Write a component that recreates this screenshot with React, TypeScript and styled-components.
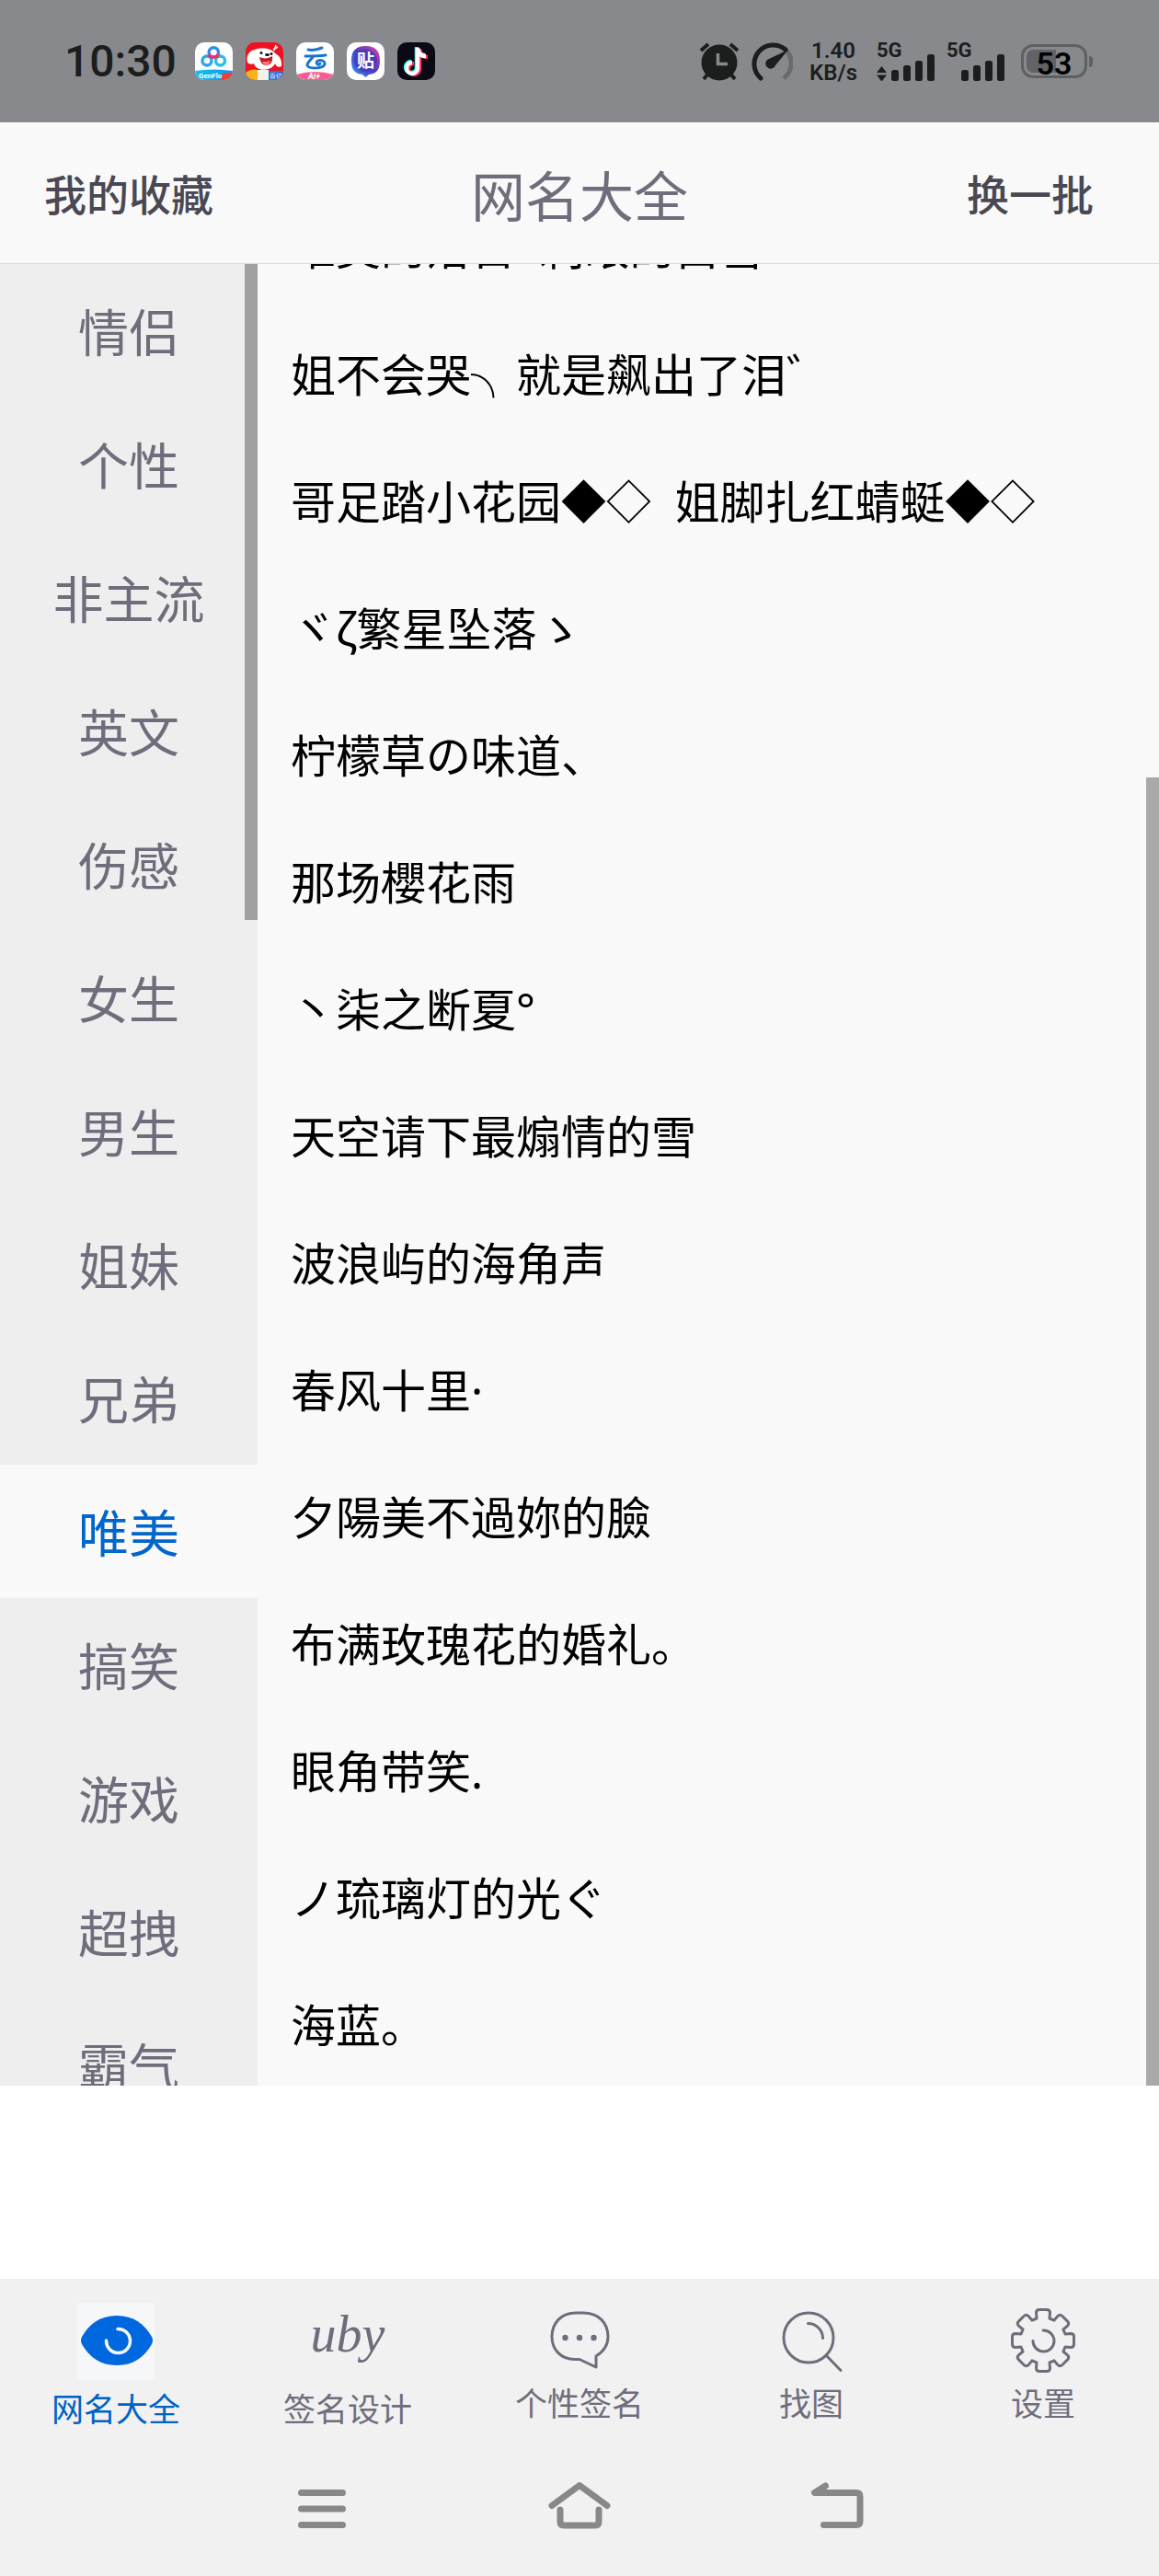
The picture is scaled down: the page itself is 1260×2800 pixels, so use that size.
import React, { useState } from 'react';
import styled, { createGlobalStyle } from 'styled-components';

const cjk = '"Noto Sans", "Noto Sans CJK SC", "Noto Sans CJK JP", sans-serif';

const GlobalStyle = createGlobalStyle`
  *, *::before, *::after { box-sizing: border-box; }
  body { margin: 0; background: #ffffff; font-family: ${cjk}; }
  button { margin: 0; padding: 0; border: 0; background: none; font: inherit; color: inherit; cursor: pointer; }
  ul { margin: 0; padding: 0; list-style: none; }
  svg { display: block; }
`;

const Screen = styled.div`
  display: flex;
  flex-direction: column;
  height: 100vh;
  overflow: hidden;
`;

/* ---------- status bar ---------- */

const StatusBar = styled.div`
  flex: none;
  display: flex;
  align-items: center;
  justify-content: space-between;
  height: 133px;
  padding: 0 72px 0 70px;
  background: #88898d;
  color: #1c1e1e;
  font-family: Roboto, sans-serif;
  font-weight: 500;
`;

const StatusGroup = styled.div<{ $gap: number }>`
  display: flex;
  align-items: center;
  gap: ${(p) => p.$gap}px;
`;

const Clock = styled.time`
  margin-right: 6px;
  font-size: 48px;
  line-height: 56px;
`;

const AppBadge = styled.svg`
  width: 41px;
  height: 41px;
  border-radius: 10px;
`;

const NetSpeed = styled.div`
  display: flex;
  flex-direction: column;
  align-items: center;
  margin: 0 9px 0 6px;
  font-size: 24px;
  line-height: 24px;
  font-weight: 600;
`;

const SignalBox = styled.div`
  display: grid;
  width: 64px;
  height: 42px;
  > * { grid-area: 1 / 1; }
`;

const SignalLabel = styled.span`
  font-size: 22px;
  line-height: 17px;
  font-weight: 700;
`;

const BatteryBox = styled.div`
  display: flex;
  align-items: center;
  gap: 2px;
  margin-left: 5px;
`;

const BatteryCell = styled.div`
  display: grid;
  place-items: center;
  width: 72px;
  height: 37px;
  border: 3px solid #5f6063;
  border-radius: 13px;
  background: linear-gradient(90deg, #626366 0 32px, #88898d 32px) content-box;
  padding: 3px;
  color: #000000;
  font-size: 34px;
  line-height: 30px;
  font-weight: 600;
`;

const BatteryTip = styled.span`
  width: 4px;
  height: 12px;
  border-radius: 0 6px 6px 0;
  background: #5f6063;
`;

/* ---------- header ---------- */

const Header = styled.header`
  flex: none;
  display: grid;
  grid-template-columns: 1fr auto 1fr;
  align-items: center;
  height: 154px;
  border-bottom: 1px solid #dadada;
  background: #f9f9f9;
`;

const HeaderAction = styled.button<{ $side: 'left' | 'right' }>`
  justify-self: ${(p) => (p.$side === 'left' ? 'start' : 'end')};
  padding: ${(p) => (p.$side === 'left' ? '2px 0 0 48px' : '2px 71px 0 0')};
  color: #4a4854;
  font-size: 46px;
  line-height: 60px;
  font-weight: 500;
`;

const Title = styled.h1`
  margin: 0;
  padding-top: 6px;
  color: #6f6d7b;
  font-size: 59px;
  line-height: 60px;
  font-weight: 400;
`;

/* ---------- body ---------- */

const Body = styled.main`
  flex: 1;
  min-height: 0;
  display: grid;
  grid-template-columns: 280px 1fr;
  overflow: hidden;
`;

const Pane = styled.section<{ $bg: string }>`
  position: relative;
  min-height: 0;
  overflow: hidden;
  background: ${(p) => p.$bg};
`;

const Thumb = styled.span<{ $top: string; $height: string }>`
  position: absolute;
  top: ${(p) => p.$top};
  right: 0;
  width: 14px;
  height: ${(p) => p.$height};
  background: rgba(0, 0, 0, 0.32);
`;

const Category = styled.button<{ $active: boolean }>`
  display: block;
  width: 100%;
  height: 145px;
  padding-top: 2px;
  background: ${(p) => (p.$active ? '#f9f9f9' : 'transparent')};
  color: ${(p) => (p.$active ? '#0066cc' : '#6f6d7b')};
  font-size: 55px;
  line-height: 60px;
  text-align: center;
`;

/* The list is scrolled part of a row past its top edge. */
const NameList = styled.ul`
  margin-top: -87px;
`;

const NameRow = styled.li`
  display: flex;
  align-items: center;
  height: 138px;
  padding: 0 36px;
  color: #000000;
  font-size: 49px;
  line-height: 60px;
  white-space: pre;
`;

const AdSlot = styled.div`
  flex: none;
  height: 210px;
  background: #ffffff;
`;

/* ---------- bottom ---------- */

const TabBar = styled.nav`
  flex: none;
  display: grid;
  grid-template-columns: repeat(5, 1fr);
  height: 177px;
  padding-top: 26px;
  background: #f1f1f1;
`;

const Tab = styled.button<{ $active: boolean; $gap: number }>`
  display: flex;
  flex-direction: column;
  align-items: center;
  justify-content: flex-start;
  gap: ${(p) => p.$gap}px;
  color: ${(p) => (p.$active ? '#0062c4' : '#6f6d7b')};
  font-size: 35px;
  line-height: 48px;
`;

const TabIcon = styled.svg<{ $active?: boolean }>`
  width: 84px;
  height: 84px;
  background: ${(p) => (p.$active ? '#f6f7f8' : 'transparent')};
  fill: none;
  stroke: currentColor;
  stroke-width: 3;
  stroke-linecap: round;
  stroke-linejoin: round;
`;

const SystemNav = styled.nav`
  flex: none;
  display: grid;
  grid-template-columns: repeat(3, 1fr);
  justify-items: center;
  align-items: center;
  height: 146px;
  padding: 0 calc(100% / 6);
  background: #f1f1f1;
  color: #888888;
`;

const SystemIcon = styled.svg`
  width: 70px;
  height: 70px;
  fill: none;
  stroke: currentColor;
  stroke-width: 7;
  stroke-linecap: round;
  stroke-linejoin: round;
`;

/* ---------- drawings ---------- */

function AppBadges() {
  return (
    <>
      <AppBadge viewBox="0 0 41 41" aria-hidden="true">
        <defs>
          <linearGradient id="flow" x1="0" x2="1">
            <stop offset="0" stopColor="#12c4e8" />
            <stop offset="1" stopColor="#1a8df0" />
          </linearGradient>
        </defs>
        <rect width="41" height="41" fill="#fff" />
        <g fill="none" strokeWidth="3.4">
          <circle cx="13" cy="20" r="5" stroke="#2ba6e8" />
          <circle cx="27.5" cy="20" r="5" stroke="#27bfe6" />
          <circle cx="20.3" cy="11" r="5.2" stroke="#2f8fe8" />
          <path d="M15.3 13c1 4 9 4 10 0" stroke="#f0306c" />
        </g>
        <path d="M0 31q20-3 41 0v10H0z" fill="url(#flow)" />
        <path d="M30 34l11-1v8H28z" fill="#f0412c" />
        <text x="4" y="39" fill="#fff" fontSize="8" fontWeight="700">GenFlo</text>
      </AppBadge>
      <AppBadge viewBox="0 0 41 41" aria-hidden="true">
        <rect width="41" height="41" fill="#ee1220" />
        <path d="M2 22c-2-9 3-13 8-14 8-3 19-1 22 4 5 2 8 8 7 14-3 2-6 0-7-3-3 8-20 10-23 0-2 1-5 1-7-1z" fill="#fff" />
        <path d="M15 16c5 2 9 2 14-1 1 6-2 10-7 10-4 0-6-4-7-9z" fill="#c41a28" />
        <path d="M18 21c3 0 6 0 9-1-1 3-3 5-5 5-2 0-3-2-4-4z" fill="#f77" />
        <circle cx="17" cy="11.5" r="1.5" fill="#111" />
        <circle cx="28" cy="12.5" r="1.5" fill="#111" />
        <ellipse cx="23.5" cy="13.5" rx="2.5" ry="1.5" fill="#111" />
        <path d="M33 3l-2 6m4-4l-5 3" stroke="#fff" strokeWidth="1.5" />
        <path d="M0 33q6-5 13-3v11H0z" fill="#fbb416" />
        <path d="M13 30h12v11H13z" fill="#f6f1e6" />
        <path d="M25 31h16v10H25z" fill="#2d72d8" />
        <text x="26" y="39" fill="#fff" fontSize="7">百亿</text>
      </AppBadge>
      <AppBadge viewBox="0 0 41 41" aria-hidden="true">
        <rect width="41" height="41" fill="#fff" />
        <g fill="none" stroke="#1873d3" strokeWidth="3" strokeLinecap="round">
          <path d="M13 8c5 1 10 0 15-2" />
          <path d="M10 15c8 0 14 0 22-1" />
          <path d="M18 16c-3 4-6 6-6 9 1 4 17 4 19-1 1-5-8-6-9-2 0 2 3 3 4 1" />
        </g>
        <path d="M0 35q20-6 41 0v6H0z" fill="#f25f94" />
        <text x="13" y="40" fill="#fff" fontSize="9" fontWeight="700" fontStyle="italic">Ai+</text>
      </AppBadge>
      <AppBadge viewBox="0 0 41 41" aria-hidden="true">
        <defs>
          <linearGradient id="bar" x1="0" x2="1" y1="1" y2="0">
            <stop offset="0" stopColor="#2a9af5" />
            <stop offset="0.5" stopColor="#4a3cc4" />
            <stop offset="1" stopColor="#e8409c" />
          </linearGradient>
        </defs>
        <rect width="41" height="41" fill="#fff" />
        <path d="M20.5 4C31 4 36 9 36 20c0 10-4 14-12 15l-3.5 3-3.5-3C9 34 5 30 5 20 5 9 10 4 20.5 4z" fill="url(#bar)" />
        <circle cx="20.5" cy="20" r="12.5" fill="#4a3dbd" />
        <text x="11" y="27" fill="#fff" fontSize="19" fontWeight="700" fontFamily="Noto Sans CJK SC">贴</text>
      </AppBadge>
      <AppBadge viewBox="0 0 41 41" aria-hidden="true">
        <rect width="41" height="41" fill="#0b0a14" />
        <g fill="none" strokeWidth="4.5">
          <path d="M22 6v22a6 6 0 1 1-6-6M22 7c1 5 4 8 9 8" stroke="#25f4ee" transform="translate(-1 -1)" />
          <path d="M22 6v22a6 6 0 1 1-6-6M22 7c1 5 4 8 9 8" stroke="#fe2c55" transform="translate(2 1)" />
          <path d="M22 6v22a6 6 0 1 1-6-6M22 7c1 5 4 8 9 8" stroke="#fff" />
        </g>
      </AppBadge>
    </>
  );
}

function AlarmIcon() {
  return (
    <svg width="44" height="42" viewBox="0 0 44 42" fill="none" aria-hidden="true">
      <circle cx="22" cy="22" r="19.5" fill="#1c1e1e" />
      <path d="M2 9l8-7M42 9l-8-7M5 40l5-6M39 40l-5-6" stroke="#1c1e1e" strokeWidth="4" />
      <path d="M20.5 12v11.5H31" stroke="#88898d" strokeWidth="3.5" />
    </svg>
  );
}

function GaugeIcon() {
  return (
    <svg width="46" height="42" viewBox="0 0 46 42" fill="none" aria-hidden="true">
      <path d="M39 9a20.5 20.5 0 0 1-3 30" stroke="#6a6b6e" strokeWidth="5" />
      <path d="M11 39A20.5 20.5 0 1 1 38 8" stroke="#1c1e1e" strokeWidth="5" strokeLinecap="round" />
      <path d="M41 8L27 25a5.5 5.5 0 1 1-7-7z" fill="#1c1e1e" />
    </svg>
  );
}

function Signal({ transfer }: { transfer?: boolean }) {
  return (
    <SignalBox>
      <SignalLabel>5G</SignalLabel>
      <svg width="64" height="42" viewBox="0 0 64 42" fill="#1c1e1e" aria-hidden="true">
        {transfer && <path d="M0 33l5.5-7 5.5 7zM0 35.5l5.5 7 5.5-7z" />}
        <rect x="16" y="30" width="8" height="12" rx="2.5" />
        <rect x="29" y="25" width="8" height="17" rx="2.5" />
        <rect x="42" y="20" width="8" height="22" rx="2.5" />
        <rect x="55" y="13" width="8" height="29" rx="2.5" />
      </svg>
    </SignalBox>
  );
}

function EyeIcon() {
  return (
    <TabIcon viewBox="0 0 84 84" $active aria-hidden="true">
      <path
        d="M5 37C13 23 25 14 43 14s30 9 38 23q2 4 0 8C73 59 61 68 43 68S13 59 5 45q-2-4 0-8z"
        fill="#0068de"
        stroke="none"
      />
      <path d="M44 28.5a13 13 0 1 1-12.5 12.500" stroke="#f4f8fd" strokeWidth="3.5" />
    </TabIcon>
  );
}

function SignatureIcon() {
  return (
    <TabIcon viewBox="0 0 84 84" aria-hidden="true">
      <text
        x="42"
        y="53"
        textAnchor="middle"
        fill="currentColor"
        stroke="none"
        fontFamily="Liberation Serif"
        fontStyle="italic"
        fontSize="56"
      >
        uby
      </text>
    </TabIcon>
  );
}

function BubbleIcon() {
  return (
    <TabIcon viewBox="0 0 84 84" aria-hidden="true">
      <path d="M38 11h8c17 0 27 11 27 26 0 9-5 16-13 21v12L42 61.500h-5C21 61.500 12 50 12 37c0-15 10-26 26-26z" />
      <g fill="currentColor" stroke="none">
        <circle cx="26.5" cy="38" r="3.2" />
        <circle cx="42" cy="38" r="3.2" />
        <circle cx="57.5" cy="38" r="3.2" />
      </g>
    </TabIcon>
  );
}

function SearchIcon() {
  return (
    <TabIcon viewBox="0 0 84 84" aria-hidden="true">
      <circle cx="39" cy="38" r="27" />
      <path d="M58 57l16 16.5M38.500 22.500a16 16 0 0 1 16 16" />
    </TabIcon>
  );
}

function gearOutline(cx: number, cy: number): string {
  const tooth: Array<[number, number]> = [
    [-7, -24],
    [-7.5, -30],
    [-4, -33.5],
    [4, -33.5],
    [7.5, -30],
    [7, -24],
  ];
  const at = (i: number, [x, y]: [number, number]) => {
    const a = (i * Math.PI) / 4;
    const px = cx + x * Math.cos(a) - y * Math.sin(a);
    const py = cy + x * Math.sin(a) + y * Math.cos(a);
    return `${px.toFixed(1)} ${py.toFixed(1)}`;
  };
  let d = '';
  for (let i = 0; i < 8; i += 1) {
    const p = tooth.map((t) => at(i, t));
    d += `${i ? 'L' : 'M'}${p[0]}L${p[1]}Q${at(i, [-7.5, -33.5])} ${p[2]}L${p[3]}Q${at(i, [7.5, -33.5])} ${p[4]}L${p[5]}`;
  }
  return `${d}Z`;
}

function GearIcon() {
  return (
    <TabIcon viewBox="0 0 84 84" aria-hidden="true">
      <path d={gearOutline(42, 41)} />
      <path d="M42 30a11.5 11.5 0 1 1-11 11.500" />
    </TabIcon>
  );
}

/* ---------- data ---------- */

const categories = [
  '情侣', '个性', '非主流', '英文', '伤感', '女生', '男生',
  '姐妹', '兄弟', '唯美', '搞笑', '游戏', '超拽', '霸气',
];

const names = [
  '唯美的落日  刺眼的白雪',
  '姐不会哭╮就是飙出了泪゛',
  '哥足踏小花园◆◇  姐脚扎红蜻蜓◆◇',
  'ヾζ繁星坠落ゝ',
  '柠檬草の味道、',
  '那场櫻花雨',
  '丶柒之断夏°',
  '天空请下最煽情的雪',
  '波浪屿的海角声',
  '春风十里·',
  '夕陽美不過妳的臉',
  '布满玫瑰花的婚礼。',
  '眼角带笑.',
  'ノ琉璃灯的光ぐ',
  '海蓝。',
];

const tabs = [
  { label: '网名大全', Icon: EyeIcon, gap: 8 },
  { label: '签名设计', Icon: SignatureIcon, gap: 8 },
  { label: '个性签名', Icon: BubbleIcon, gap: 2 },
  { label: '找图', Icon: SearchIcon, gap: 2 },
  { label: '设置', Icon: GearIcon, gap: 2 },
];

export default function App() {
  const [category, setCategory] = useState('唯美');
  const [tab, setTab] = useState('网名大全');

  return (
    <Screen>
      <GlobalStyle />
      <StatusBar>
        <StatusGroup $gap={14}>
          <Clock>10:30</Clock>
          <AppBadges />
        </StatusGroup>
        <StatusGroup $gap={12}>
          <AlarmIcon />
          <GaugeIcon />
          <NetSpeed>
            <span>1.40</span>
            <span>KB/s</span>
          </NetSpeed>
          <StatusGroup $gap={12}>
            <Signal transfer />
            <Signal />
          </StatusGroup>
          <BatteryBox>
            <BatteryCell>53</BatteryCell>
            <BatteryTip />
          </BatteryBox>
        </StatusGroup>
      </StatusBar>

      <Header>
        <HeaderAction type="button" $side="left">我的收藏</HeaderAction>
        <Title>网名大全</Title>
        <HeaderAction type="button" $side="right">换一批</HeaderAction>
      </Header>

      <Body>
        <Pane $bg="#eeeeee" aria-label="分类">
          {categories.map((name) => (
            <Category
              key={name}
              type="button"
              $active={name === category}
              onClick={() => setCategory(name)}
            >
              {name}
            </Category>
          ))}
          <Thumb $top="0" $height="36%" />
        </Pane>
        <Pane $bg="#f9f9f9" aria-label={category}>
          <NameList>
            {names.map((name) => (
              <NameRow key={name}>{name}</NameRow>
            ))}
          </NameList>
          <Thumb $top="28.2%" $height="71.8%" />
        </Pane>
      </Body>

      <AdSlot />

      <TabBar>
        {tabs.map(({ label, Icon, gap }) => (
          <Tab
            key={label}
            type="button"
            $active={label === tab}
            $gap={gap}
            onClick={() => setTab(label)}
          >
            <Icon />
            <span>{label}</span>
          </Tab>
        ))}
      </TabBar>

      <SystemNav>
        <button type="button" aria-label="最近任务">
          <SystemIcon viewBox="0 0 70 70">
            <path d="M12.5 17.500h45M12.5 35h45M12.5 52.500h45" />
          </SystemIcon>
        </button>
        <button type="button" aria-label="主屏幕">
          <SystemIcon viewBox="0 0 70 70">
            <path d="M5 31.500L35 9.500l30 22M14 36v13q0 4 4 4h34q4 0 4-4V36" />
          </SystemIcon>
        </button>
        <button type="button" aria-label="返回">
          <SystemIcon viewBox="0 0 70 70">
            <path d="M22.500 10L10.500 17.500H56q4 0 4 4v27q0 4-4 4H20.500" />
          </SystemIcon>
        </button>
      </SystemNav>
    </Screen>
  );
}
